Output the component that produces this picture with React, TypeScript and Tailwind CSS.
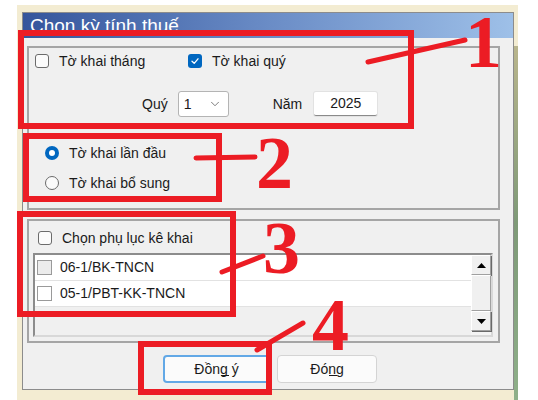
import { ChevronDown } from "lucide-react";

function Box({ checked = false, dim = false }: { checked?: boolean; dim?: boolean }) {
  if (checked) {
    return (
      <span className="flex h-[14px] w-[14px] shrink-0 items-center justify-center rounded-[3px] bg-[#0067c0]">
        <svg width="10" height="10" viewBox="0 0 10 10">
          <path d="M2 5.2 4.2 7.3 8 2.8" fill="none" stroke="#fff" strokeWidth="1.3" strokeLinecap="round" strokeLinejoin="round" />
        </svg>
      </span>
    );
  }
  return (
    <span
      className={`h-[14px] w-[14px] shrink-0 rounded-[3px] border border-[#6b6b6b] ${dim ? "bg-[#f0f0f0]" : "bg-[#fbfbfb]"}`}
    />
  );
}

function ListBox({ dim = false }: { dim?: boolean }) {
  return (
    <span
      className={`h-[15px] w-[15px] shrink-0 border border-[#9a9a9a] ${dim ? "bg-[#ececec]" : "bg-white"}`}
    />
  );
}

function Radio({ on = false }: { on?: boolean }) {
  if (on) {
    return (
      <span className="flex h-[14px] w-[14px] shrink-0 items-center justify-center rounded-full bg-[#0067c0]">
        <span className="h-[6px] w-[6px] rounded-full bg-white" />
      </span>
    );
  }
  return <span className="h-[14px] w-[14px] shrink-0 rounded-full border border-[#6b6b6b] bg-[#fbfbfb]" />;
}

function ScrollBtn({ up }: { up?: boolean }) {
  return (
    <div className="flex h-[20px] items-center justify-center border border-b-[#a0a0a0] border-l-white border-r-[#a0a0a0] border-t-white bg-[#f0f0f0] shadow-[1px_1px_0_#696969]">
      <svg width="9" height="5" viewBox="0 0 9 5">
        <path d={up ? "M0 5 4.5 0 9 5Z" : "M0 0 4.5 5 9 0Z"} fill="#000" />
      </svg>
    </div>
  );
}

// button caption with a mnemonic underline drawn under one letter
function Caption({ text, at, width }: { text: string; at: number; width: number }) {
  return (
    <span className="relative">
      {text}
      <span className="absolute top-[16px] h-[1px] bg-[#1a1a1a]" style={{ left: at, width }} />
    </span>
  );
}

const red = "border-[6px] border-[#ec1c24]";
const num = "absolute h-[56px] font-['Liberation_Serif',serif] text-[74px] font-bold leading-[56px] text-[#ec1c24]";

export default function App() {
  return (
    <div className="relative h-[400px] w-[538px] overflow-hidden bg-white font-['Liberation_Sans',Arial,sans-serif] text-[14px] text-[#1a1a1a]">
      <div className="ml-[17px] mt-[5px] flex h-[395px] w-[501px] bg-[#f3ecd2] pl-[5px] pt-[7px]">
        <div className="flex h-[378px] w-[492px] flex-col border border-[#8c8c8c] bg-[#f0f0f0]">
          <div className="h-[25px] bg-gradient-to-r from-[#35559c] via-[#6a8cc6] to-[#9ec0e8] pl-[7px] text-[19px] leading-[25px] text-white">
            Chọn kỳ tính thuế
          </div>
          <div className="flex flex-col pl-[4px] pr-[13px] pt-[8px]">
            {/* group 1 */}
            <div className="flex h-[164px] flex-col border-2 border-[#a5a5a5] pl-[6px] pt-[6px]">
              <div className="flex h-[14px] items-center">
                <label className="flex w-[153px] items-center gap-[10px]">
                  <Box />
                  <span>Tờ khai tháng</span>
                </label>
                <label className="flex items-center gap-[10px]">
                  <Box checked />
                  <span>Tờ khai quý</span>
                </label>
              </div>
              <div className="ml-[107px] mt-[23px] flex h-[26px] items-center">
                <span>Quý</span>
                <div className="ml-[10px] flex h-[26px] w-[51px] items-center justify-between rounded-[3px] border border-[#b4b4b4] bg-white pl-[5px] pr-[6px]">
                  <span>1</span>
                  <ChevronDown size={14} strokeWidth={1.3} color="#555" />
                </div>
                <span className="ml-[44px]">Năm</span>
                <div className="ml-[12px] flex h-[24px] w-[63px] items-center justify-center rounded-[2px] border-b border-b-[#8a8a8a] bg-white shadow-[0_0_0_1px_#e2e2e2]">
                  2025
                </div>
              </div>
              <div className="ml-[10px] mt-[29px] flex flex-col gap-[16px]">
                <label className="flex h-[14px] items-center gap-[10px]">
                  <Radio on />
                  <span>Tờ khai lần đầu</span>
                </label>
                <label className="flex h-[14px] items-center gap-[10px]">
                  <Radio />
                  <span>Tờ khai bổ sung</span>
                </label>
              </div>
            </div>

            {/* group 2 */}
            <div className="mt-[9px] flex h-[124px] flex-col border-2 border-[#a5a5a5] pl-[9px] pt-[10px]">
              <label className="flex h-[14px] items-center gap-[10px]">
                <Box />
                <span>Chọn phụ lục kê khai</span>
              </label>
              <div className="-ml-[5px] mt-[8px] flex h-[84px] w-[460px] border-2 border-b-[#d8d8d8] border-l-[#8c8c8c] border-r-[#d8d8d8] border-t-[#8c8c8c] bg-[#f0f0f0]">
                <div className="flex flex-1 flex-col">
                  <div className="flex h-[26px] items-center gap-[8px] border-b border-[#e2e2e2] bg-white pl-[2px]">
                    <ListBox dim />
                    <span>06-1/BK-TNCN</span>
                  </div>
                  <div className="flex h-[26px] items-center gap-[8px] border-b border-[#e2e2e2] bg-white pl-[2px]">
                    <ListBox />
                    <span>05-1/PBT-KK-TNCN</span>
                  </div>
                </div>
                <div className="flex w-[20px] flex-col bg-[#f4f4f4]">
                  <ScrollBtn up />
                  <div className="h-[36px] border border-b-[#a0a0a0] border-l-white border-r-[#a0a0a0] border-t-white bg-[#f0f0f0]" />
                  <ScrollBtn />
                </div>
              </div>
            </div>

            <div className="ml-[136px] mt-[12px] flex items-center gap-[7px]">
              <button className="flex h-[28px] w-[107px] items-center justify-center rounded-[4px] border-2 border-[#62a8e6] bg-[#fbfbfb] text-[14px]">
                <Caption text="Đồng ý" at={27} width={8} />
              </button>
              <button className="flex h-[28px] w-[100px] items-center justify-center rounded-[4px] border border-[#d4d4d4] bg-[#fbfbfb] text-[14px]">
                <Caption text="Đóng" at={19} width={8} />
              </button>
            </div>
          </div>
        </div>
      </div>

      {/* desktop edge on the right */}
      <div className="absolute left-[514px] top-[46px] h-[354px] w-[4px] bg-gradient-to-b from-[#b9b58c] via-[#7f9a78] to-[#8fb08a]" />

      {/* annotations */}
      <div className={`absolute left-[18px] top-[30px] h-[99px] w-[396px] ${red}`} />
      <div className={`absolute left-[23px] top-[133px] h-[69px] w-[199px] ${red}`} />
      <div className={`absolute left-[17px] top-[211px] h-[106px] w-[219px] ${red}`} />
      <div className={`absolute left-[138px] top-[341px] h-[54px] w-[134px] ${red}`} />

      <svg className="pointer-events-none absolute left-0 top-0" width="538" height="400">
        <g stroke="#ec1c24" strokeWidth="5" strokeLinecap="round">
          <line x1="368" y1="62" x2="465" y2="40" />
          <line x1="196" y1="158" x2="255" y2="157" />
          <line x1="222" y1="272" x2="263" y2="256" />
          <line x1="257" y1="350" x2="303" y2="323" />
        </g>
      </svg>

      <span className={`${num} left-[465px] top-[14px]`}>1</span>
      <span className={`${num} left-[256px] top-[135px]`}>2</span>
      <span className={`${num} left-[263px] top-[220px]`}>3</span>
      <span className={`${num} left-[312px] top-[297px]`}>4</span>
    </div>
  );
}
